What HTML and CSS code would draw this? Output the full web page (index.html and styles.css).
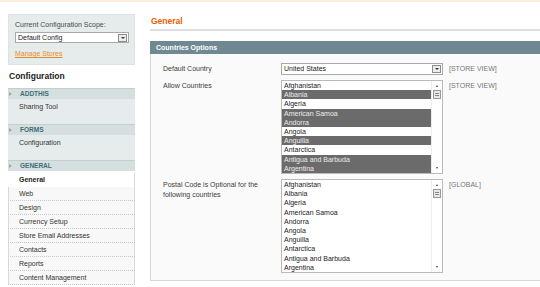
FILE: index.html
```html
<!DOCTYPE html>
<html>
<head>
<meta charset="utf-8">
<link rel="stylesheet" href="styles.css">
</head>
<body>
<div class="topbar"></div>
<div class="page">
  <aside class="side">
    <div class="scope">
      <div class="scope-label">Current Configuration Scope:</div>
      <div class="select scope-select"><span>Default Config</span><span class="arrow"></span></div>
      <a class="manage" href="#">Manage Stores</a>
    </div>
    <h3 class="side-title">Configuration</h3>
    <div class="sec-head"><span class="tri"></span>ADDTHIS</div>
    <div class="sec-items"><div class="sec-item">Sharing Tool</div></div>
    <div class="sec-head"><span class="tri"></span>FORMS</div>
    <div class="sec-items"><div class="sec-item">Configuration</div></div>
    <div class="sec-head"><span class="tri"></span>GENERAL</div>
    <ul class="tabs">
      <li class="active">General</li>
      <li>Web</li>
      <li>Design</li>
      <li>Currency Setup</li>
      <li>Store Email Addresses</li>
      <li>Contacts</li>
      <li>Reports</li>
      <li>Content Management</li>
    </ul>
  </aside>
  <main class="main">
    <div class="content-header"><h3>General</h3></div>
    <div class="entry-head">Countries Options</div>
    <div class="fieldset">
      <div class="label">Default Country</div>
      <div class="select"><span>United States</span><span class="arrow"></span></div>
      <div class="scope-note">[STORE VIEW]</div>

      <div class="label">Allow Countries</div>
      <div class="multi">
        <div class="opts">
          <div class="opt">Afghanistan</div>
          <div class="opt sel">Albania</div>
          <div class="opt">Algeria</div>
          <div class="opt sel">American Samoa</div>
          <div class="opt sel">Andorra</div>
          <div class="opt">Angola</div>
          <div class="opt sel">Anguilla</div>
          <div class="opt">Antarctica</div>
          <div class="opt sel">Antigua and Barbuda</div>
          <div class="opt sel">Argentina</div>
        </div>
        <div class="scroll"><span class="up"></span><span class="thumb"></span><span class="fill"></span><span class="down"></span></div>
      </div>
      <div class="scope-note">[STORE VIEW]</div>

      <div class="label">Postal Code is Optional for the following countries</div>
      <div class="multi">
        <div class="opts">
          <div class="opt">Afghanistan</div>
          <div class="opt">Albania</div>
          <div class="opt">Algeria</div>
          <div class="opt">American Samoa</div>
          <div class="opt">Andorra</div>
          <div class="opt">Angola</div>
          <div class="opt">Anguilla</div>
          <div class="opt">Antarctica</div>
          <div class="opt">Antigua and Barbuda</div>
          <div class="opt">Argentina</div>
        </div>
        <div class="scroll"><span class="up"></span><span class="thumb"></span><span class="fill"></span><span class="down"></span></div>
      </div>
      <div class="scope-note">[GLOBAL]</div>
    </div>
  </main>
</div>
</body>
</html>
```
FILE: styles.css
```css
html, body {
  margin: 0;
  padding: 0;
  background: #fff;
  overflow: hidden;
}
body {
  font-family: "Liberation Sans", Arial, sans-serif;
  font-size: 7px;
  color: #2f2f2f;
}
.topbar {
  height: 2px;
  background: #fbeedd;
}
.page {
  display: flex;
  align-items: flex-start;
  padding-top: 12px;
}

/* ---------- sidebar ---------- */
.side {
  width: 127px;
  margin-left: 8px;
  flex: none;
}
.scope {
  box-sizing: border-box;
  height: 51px;
  background: #e6ebeb;
  border: 1px solid #dde3e3;
  padding: 5px 0 0 6px;
}
.scope-label {
  line-height: 9px;
  color: #4a4a4a;
}
.select {
  box-sizing: border-box;
  height: 12px;
  background: #fff;
  border: 1px solid #a9a9a9;
  display: flex;
  align-items: center;
  justify-content: space-between;
  padding: 0 1px 0 2px;
  color: #222;
  line-height: 10px;
}
.scope-select {
  width: 114px;
  margin-top: 3px;
  height: 11px;
}
.arrow {
  box-sizing: border-box;
  width: 9px;
  height: 8px;
  border: 1px solid #8c8c8c;
  background: #ececec;
  display: flex;
  align-items: center;
  justify-content: center;
}
.arrow::after {
  content: "";
  border-left: 2px solid transparent;
  border-right: 2px solid transparent;
  border-top: 2px solid #333;
}
.manage {
  display: block;
  margin-top: 6px;
  line-height: 9px;
  color: #e88b1c;
  text-decoration: underline;
}
.side-title {
  margin: 0;
  height: 23px;
  line-height: 23px;
  background: #fff;
  font-size: 8.5px;
  font-weight: bold;
  color: #222;
  padding-left: 1px;
}
.sec-head {
  height: 10px;
  line-height: 10px;
  border-top: 1px solid #c3cfcf;
  background: #d5dfdf;
  color: #3f6e77;
  font-weight: bold;
  font-size: 6.5px;
  display: flex;
  align-items: center;
}
.tri {
  width: 0;
  height: 0;
  border-top: 2px solid transparent;
  border-bottom: 2px solid transparent;
  border-left: 3px solid #9aabab;
  margin: 0 8px 0 1px;
}
.sec-items {
  box-sizing: border-box;
  height: 25px;
  background: #e6ecec;
  padding-top: 1px;
}
.sec-item {
  line-height: 14px;
  padding-left: 11px;
  color: #333;
}
.tabs {
  list-style: none;
  margin: 2px 0 0;
  padding: 0;
}
.tabs li {
  box-sizing: border-box;
  height: 14px;
  line-height: 13px;
  padding-left: 10px;
  background: #f8f8f8;
  border-left: 1px solid #d9d9d9;
  border-right: 1px solid #d9d9d9;
  border-bottom: 1px dotted #c8c8c8;
  color: #333;
}
.tabs li.active {
  background: #fff;
  font-weight: bold;
  color: #222;
  border-left-color: #fff;
  border-bottom: 1px solid #fff;
}

/* ---------- main ---------- */
.main {
  flex: 1;
  min-width: 0;
  margin-left: 15px;
  margin-right: -12px;
}
.content-header {
  padding: 2px 0 2px 1px;
  border-bottom: 2px solid #dedede;
  margin-bottom: 10px;
}
.content-header h3 {
  margin: 0;
  line-height: 11px;
  font-size: 8.5px;
  font-weight: bold;
  color: #eb5e00;
}
.entry-head {
  height: 13px;
  line-height: 13px;
  background: #6f8992;
  color: #fff;
  font-weight: bold;
  padding-left: 6px;
}
.fieldset {
  background: #fafafa;
  border: 1px solid #d6d6d6;
  border-top: 0;
  padding: 9px 0 7px 12px;
  display: grid;
  grid-template-columns: 118px 162px auto;
  row-gap: 5px;
  align-items: start;
}
.label {
  line-height: 10px;
  padding-right: 8px;
  padding-top: 1px;
  color: #3a3a3a;
}
.scope-note {
  margin-left: 6px;
  line-height: 10px;
  padding-top: 1px;
  color: #777;
}
.multi {
  box-sizing: border-box;
  height: 94px;
  background: #fff;
  border: 1px solid #b9b9b9;
  display: flex;
}
.opts {
  flex: 1;
}
.opt {
  height: 9.2px;
  line-height: 9.2px;
  padding-left: 2px;
  color: #222;
  white-space: nowrap;
}
.opt.sel {
  background: #6b6b6b;
  color: #ececec;
}
.scroll {
  width: 10px;
  display: flex;
  flex-direction: column;
  align-items: center;
  background: #fff;
  border-left: 1px solid #ececec;
}
.up, .down {
  width: 0;
  height: 0;
  border-left: 1.5px solid transparent;
  border-right: 1.5px solid transparent;
  margin: 4px 0 3px;
}
.up {
  border-bottom: 2px solid #444;
}
.down {
  border-top: 2px solid #444;
  margin: 3px 0 4px;
}
.thumb {
  box-sizing: border-box;
  width: 8px;
  height: 9px;
  border: 1px solid #9a9a9a;
  background: repeating-linear-gradient(#e8e8e8 0 1px, #888 1px 2px);
  background-size: 4px 5px;
  background-position: center;
  background-repeat: no-repeat;
  background-color: #e8e8e8;
}
.fill {
  flex: 1;
}
```
